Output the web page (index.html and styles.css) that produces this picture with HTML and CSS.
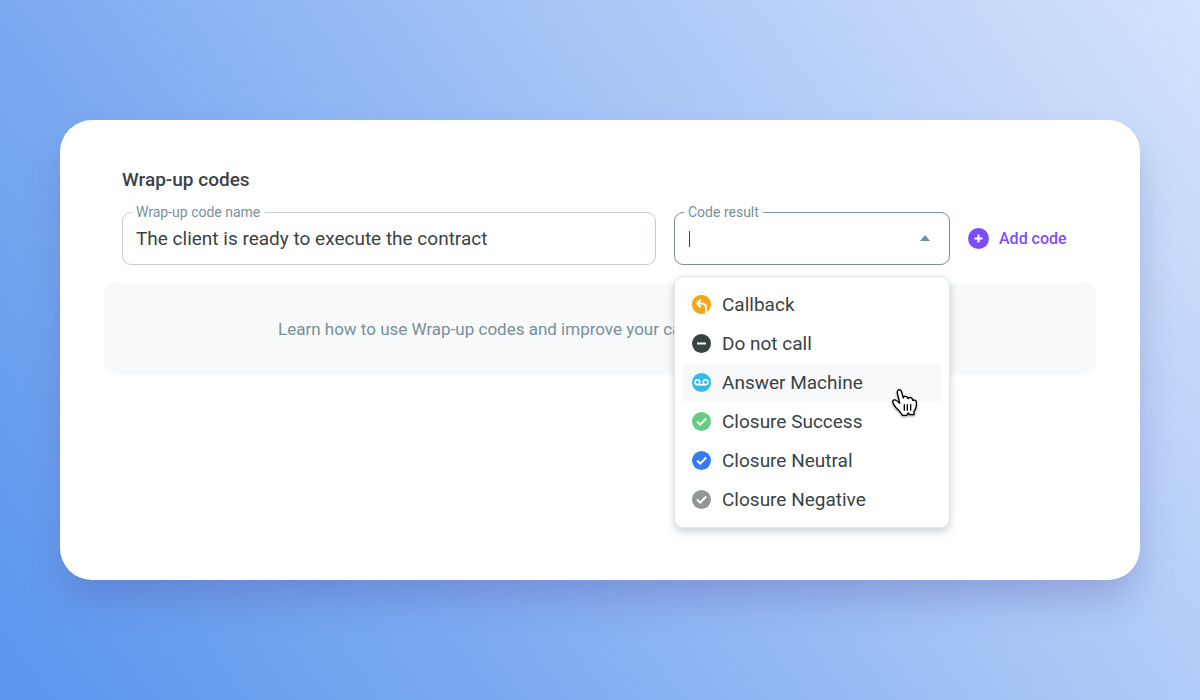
FILE: index.html
```html
<!DOCTYPE html>
<html lang="en">
<head>
  <meta charset="UTF-8" />
  <meta name="viewport" content="width=device-width, initial-scale=1.0" />
  <title>Wrap-up codes</title>
  <link rel="stylesheet" href="styles.css">
</head>
<body>
  <main class="card">
    <h1 class="title">Wrap-up codes</h1>

    <form class="code-form">
      <div class="field">
        <label for="codeName">Wrap-up code name</label>
        <input type="text" id="codeName" value="The client is ready to execute the contract">
      </div>

      <div class="field active">
        <label for="codeResult">Code result</label>
        <input type="text" id="codeResult" role="combobox" aria-expanded="true" aria-controls="resultMenu">
        <span class="caret"></span>
        <svg class="arrow" viewBox="0 0 10 6"><path d="M5 0 L10 6 H0 Z" /></svg>

        <div class="menu" id="resultMenu" role="listbox" aria-label="Code result">
          <button type="button" class="option" role="option">
            <svg class="icon" viewBox="0 0 19 19">
              <path fill="#f3a71b" d="M13.2 18.2A9.5 9.5 0 1 1 17.2 15L15.6 17V13q0-5.6-5.6-5.6z" />
              <circle cx="9.5" cy="9.5" r="9.2" fill="#f3a71b" />
              <path class="line thick" d="M8.8 4.8 5 8.6 8.8 12.4M5.4 8.6h4.2q4.6 0 4.6 4.8v5.6" />
            </svg>
            Callback
          </button>
          <button type="button" class="option" role="option">
            <svg class="icon" viewBox="0 0 19 19">
              <circle cx="9.5" cy="9.5" r="9.5" fill="#3b4245" />
              <path class="line thick" d="M5 9.5h9" />
            </svg>
            Do not call
          </button>
          <button type="button" class="option hover" role="option">
            <svg class="icon" viewBox="0 0 19 19">
              <circle cx="9.5" cy="9.5" r="9.5" fill="#31bbe6" />
              <g class="line">
                <circle cx="5.4" cy="9.2" r="2.4" />
                <circle cx="13.6" cy="9.2" r="2.4" />
                <path d="M5.4 11.8h8.2" />
              </g>
            </svg>
            Answer Machine
            <svg class="pointer" viewBox="0 0 75 87">
              <path class="hand" d="M23 42 L16 12 Q15 3 21 2 Q27 2 29 10 L34 27 Q35 21 41 22 Q47 22 48 29 Q51 24 57 26 Q62 28 62 34 Q68 31 73 37 V50 Q72 60 66 68 V77 H54 L49 72 L44 79 H31 Q27 70 13 57 Q3 46 2 38 Q3 31 10 33 Q16 36 23 43 Z" />
              <path class="fingers" d="M37 46v19M46 46v19M56 46v19" />
            </svg>
          </button>
          <button type="button" class="option" role="option">
            <svg class="icon" viewBox="0 0 19 19">
              <circle cx="9.5" cy="9.5" r="9.5" fill="#66cb83" />
              <path class="line thick" d="M5 9.6 8.2 12.6 14.2 6.5" />
            </svg>
            Closure Success
          </button>
          <button type="button" class="option" role="option">
            <svg class="icon" viewBox="0 0 19 19">
              <circle cx="9.5" cy="9.5" r="9.5" fill="#377af6" />
              <path class="line thick" d="M5 9.6 8.2 12.6 14.2 6.5" />
            </svg>
            Closure Neutral
          </button>
          <button type="button" class="option" role="option">
            <svg class="icon" viewBox="0 0 19 19">
              <circle cx="9.5" cy="9.5" r="9.5" fill="#919699" />
              <path class="line thick" d="M5 9.6 8.2 12.6 14.2 6.5" />
            </svg>
            Closure Negative
          </button>
        </div>
      </div>

      <button type="button" class="add-button">
        <svg viewBox="0 0 21 21">
          <circle cx="10.5" cy="10.5" r="10.5" />
          <path d="M10.5 6.5v8M6.5 10.5h8" />
        </svg>
        Add code
      </button>
    </form>

    <p class="hint">Learn how to use Wrap-up codes and improve your calls</p>
  </main>
</body>
</html>
```
FILE: styles.css
```css
* {
  box-sizing: border-box;
}

body {
  margin: 0;
  min-height: 100vh;
  padding: 120px 60px;
  display: flex;
  font-family: Roboto, "Liberation Sans", sans-serif;
  color: #3b4245;
  background: linear-gradient(54deg, #5a95ed 0%, #7caaf1 30%, #a4c3f5 60%, #b4cdf7 72%, #d5e3fb 100%);
}

.card {
  flex: 1;
  padding: 48px 44px;
  background-color: #fff;
  border-radius: 32px;
  box-shadow: 0 22px 36px -4px rgba(83, 75, 160, 0.3);
}

.title {
  margin: 0 18px 20px;
  font-size: 19px;
  line-height: 24px;
  font-weight: 500;
}

.code-form {
  display: grid;
  grid-template-columns: 1fr 276px 110px;
  gap: 18px;
  margin: 0 18px 18px;
}

.field {
  position: relative;
}

/* label sits on the top border and cuts it */
.field label {
  position: absolute;
  top: -8px;
  left: 10px;
  padding: 0 4px;
  font-size: 14px;
  line-height: 16px;
  color: #78909c;
  background-color: #fff;
}

.field input {
  display: block;
  width: 100%;
  height: 53px;
  padding: 0 13px;
  font-family: inherit;
  font-size: 19px;
  color: inherit;
  background: none;
  border: 1px solid #c5cdd1;
  border-radius: 9px;
  outline: none;
}

.field.active input {
  border-color: #78909c;
}

.caret {
  position: absolute;
  top: 19px;
  left: 15px;
  width: 1px;
  height: 16px;
  background-color: #3b4245;
}

.arrow {
  position: absolute;
  top: 23px;
  right: 20px;
  width: 10px;
  height: 6px;
  fill: #78909c;
}

.menu {
  position: absolute;
  top: 64px;
  left: 0;
  z-index: 1;
  width: 100%;
  padding: 8px;
  background-color: #fff;
  border: 1px solid #e3e6e8;
  border-radius: 9px;
  box-shadow: 0 4px 8px rgba(59, 80, 90, 0.25);
}

.option {
  position: relative;
  display: flex;
  align-items: center;
  gap: 11px;
  width: 100%;
  height: 39px;
  padding: 0 9px;
  font-family: inherit;
  font-size: 19px;
  color: inherit;
  background: none;
  border: none;
  border-radius: 4px;
  cursor: pointer;
}

.option.hover,
.option:hover {
  background-color: #f7f9fb;
}

.icon {
  width: 19px;
  height: 19px;
}

.line {
  fill: none;
  stroke: #fff;
  stroke-width: 1.5;
}

.line.thick {
  stroke-width: 2;
}

.pointer {
  position: absolute;
  top: 26px;
  right: 24px;
  z-index: 1;
  width: 25px;
  height: 29px;
  filter: drop-shadow(0 1px 1px rgba(0, 0, 0, 0.4));
}

.hand {
  fill: #fff;
  stroke: #000;
  stroke-width: 4;
  stroke-linejoin: round;
}

.fingers {
  stroke: #000;
  stroke-width: 4;
}

.add-button {
  display: flex;
  align-items: center;
  gap: 10px;
  padding: 0;
  font-family: inherit;
  font-size: 16px;
  font-weight: 500;
  color: #7c4dff;
  white-space: nowrap;
  background: none;
  border: none;
  cursor: pointer;
}

.add-button svg {
  flex: none;
  width: 21px;
  height: 21px;
  fill: #7c4dff;
  stroke-width: 2;
}

.add-button path {
  stroke: #fff;
}

.hint {
  margin: 0;
  padding: 34px 174px;
  font-size: 17px;
  line-height: 24px;
  color: #78909c;
  background-color: #f7f9fb;
  border-radius: 12px;
}
```
